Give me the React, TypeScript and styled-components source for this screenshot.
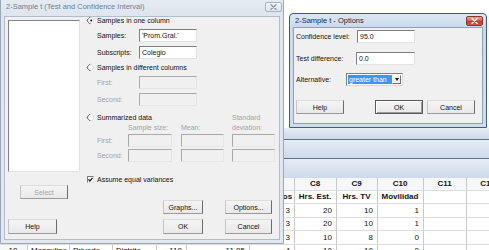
import React from "react";
import styled, { createGlobalStyle, css } from "styled-components";

const Global = createGlobalStyle`
  html, body { margin: 0; padding: 0; background: #fff; }
  body { width: 489px; height: 250px; overflow: hidden; font-family: "Liberation Sans", Arial, sans-serif; }
  * { box-sizing: border-box; }
`;

const FONT = `"Liberation Sans", Arial, sans-serif`;

/* ---------- desktop / worksheet behind ---------- */
const Desktop = styled.div`
  position: relative;
  width: 489px;
  height: 250px;
  overflow: hidden;
  background: #fff;
`;

const Worksheet = styled.div`
  display: flex;
  flex-direction: column;
  width: 100%;
`;

const SessionArea = styled.div`
  height: 128px;
  background: #fff;
`;

const Band = styled.div<{ $h: number; $line?: boolean }>`
  height: ${(p) => p.$h}px;
  background: linear-gradient(#e6edf5, #ccdaea);
  ${(p) => p.$line && css`border-bottom: 1px solid #5f7186;`}
`;

const Grid = styled.div<{ $cols: string }>`
  display: grid;
  grid-template-columns: ${(p) => p.$cols};
  font-family: ${FONT};
  color: #111;
`;

const Cell = styled.div<{ $h: number; $align?: string; $bold?: boolean; $bg?: string }>`
  height: ${(p) => p.$h}px;
  line-height: ${(p) => p.$h - 1}px;
  font-size: 8px;
  font-weight: ${(p) => (p.$bold ? 700 : 400)};
  text-align: ${(p) => p.$align || "right"};
  padding: 0 4px 0 3px;
  background: ${(p) => p.$bg || "#fff"};
  border-right: 1px solid #c9c9c9;
  border-bottom: 1px solid #dcdcdc;
  white-space: nowrap;
  overflow: hidden;
`;

/* ---------- windows ---------- */
const Win = styled.div<{ $active?: boolean }>`
  position: absolute;
  display: flex;
  flex-direction: column;
  border: 1px solid ${(p) => (p.$active ? "#3d5d7f" : "#98a8ba")};
  border-radius: 4px 4px 0 0;
  background: ${(p) =>
    p.$active
      ? "linear-gradient(#dbe6f3, #c9d9ec 14px, #cddcee)"
      : "linear-gradient(#e6ecf3, #dfe6ee 16px, #e1e8f0)"};
  padding: 0 3px 3px;
  font-family: ${FONT};
`;

const MainWin = styled(Win)`
  left: 0;
  top: -4px;
  width: 284px;
  height: 248px;
`;

const OptWin = styled(Win)`
  left: 289px;
  top: 13px;
  width: 198px;
  height: 115px;
`;

const TitleBar = styled.div<{ $h: number; $active?: boolean }>`
  height: ${(p) => p.$h}px;
  display: flex;
  align-items: center;
  justify-content: space-between;
  padding-left: 2px;
  font-size: 7.5px;
  color: ${(p) => (p.$active ? "#1b2a3c" : "#6e7f93")};
  white-space: nowrap;
`;

const CloseBtn = styled.div<{ $active?: boolean }>`
  width: 17px;
  height: 10px;
  border-radius: 2px;
  display: flex;
  align-items: center;
  justify-content: center;
  ${(p) =>
    p.$active
      ? css`
          border: 1px solid #86352b;
          background: linear-gradient(#eba597, #d3604f 45%, #c13c2c 55%, #cf5a45);
        `
      : css`
          border: 1px solid #a6b2c1;
          background: linear-gradient(#f2f5f9, #dfe5ed);
          margin-right: -2px;
        `}
`;

const Client = styled.div<{ $active?: boolean }>`
  flex: 1;
  background: #f0f0f0;
  border: 1px solid ${(p) => (p.$active ? "#8ea3bb" : "#b1bdcb")};
  font-size: 7px;
  color: #111;
`;

/* ---------- controls ---------- */
const Button = styled.div<{ $w: number; $h?: number; $default?: boolean; $disabled?: boolean; $mr?: number }>`
  width: ${(p) => p.$w}px;
  height: ${(p) => p.$h || 15}px;
  margin-right: ${(p) => p.$mr || 0}px;
  display: flex;
  align-items: center;
  justify-content: center;
  font-size: 7px;
  color: ${(p) => (p.$disabled ? "#a6a6a6" : "#111")};
  background: linear-gradient(#f4f4f4, #e9e9e9);
  border: 1px solid;
  border-color: #dcdcdc #6c6c6c #9a9a9a #c4c4c4;
  ${(p) =>
    p.$default &&
    css`
      border-color: #5a5a5a;
      box-shadow: inset 1px 1px 0 #fff, inset -1px -1px 0 #9a9a9a;
    `}
`;

const TextBox = styled.div<{ $w: number; $disabled?: boolean }>`
  width: ${(p) => p.$w}px;
  height: 13px;
  display: flex;
  align-items: center;
  padding-left: 2px;
  font-size: 7px;
  color: #111;
  white-space: nowrap;
  background: ${(p) => (p.$disabled ? "#f0f0f0" : "#fff")};
  border: 1px solid;
  border-color: ${(p) =>
    p.$disabled ? "#a9a9a9 #e6e6e6 #e6e6e6 #a9a9a9" : "#7e7e7e #e2e2e2 #e2e2e2 #7e7e7e"};
`;

const Label = styled.span<{ $disabled?: boolean }>`
  font-size: 7px;
  color: ${(p) => (p.$disabled ? "#a3a3a3" : "#111")};
  white-space: nowrap;
`;

const RadioDot = styled.span<{ $on?: boolean }>`
  position: relative;
  width: 7px;
  height: 7px;
  border-radius: 50%;
  background: #fff;
  border: 1px solid;
  border-color: #7b7b7b #e4e4e4 #e4e4e4 #7b7b7b;
  transform: rotate(-45deg);
  flex: none;
  ${(p) =>
    p.$on &&
    css`
      &::after {
        content: "";
        position: absolute;
        left: 1.5px;
        top: 1.5px;
        width: 2px;
        height: 2px;
        border-radius: 50%;
        background: #111;
      }
    `}
`;

const Check = styled.span`
  width: 7px;
  height: 7px;
  background: #fff;
  border: 1px solid;
  border-color: #7b7b7b #e4e4e4 #e4e4e4 #7b7b7b;
  display: flex;
  flex: none;
`;

const Choice = styled.div<{ $mt: number }>`
  display: flex;
  align-items: center;
  gap: 3px;
  height: 8px;
  margin-top: ${(p) => p.$mt}px;
`;

/* ---------- main dialog layout ---------- */
const MainBody = styled.div`
  display: flex;
  height: 100%;
`;

const LeftCol = styled.div`
  width: 79px;
  display: flex;
  flex-direction: column;
  align-items: flex-start;
`;

const ListBox = styled.div`
  margin: 3px 0 0 3px;
  width: 72px;
  height: 152px;
  background: #fff;
  border: 1px solid;
  border-color: #828282 #e3e3e3 #e3e3e3 #828282;
`;

const Spaced = styled.div<{ $mt: number; $ml: number }>`
  margin-top: ${(p) => p.$mt}px;
  margin-left: ${(p) => p.$ml}px;
`;

const RightCol = styled.div`
  flex: 1;
  display: flex;
  flex-direction: column;
  padding-left: 3px;
`;

const FieldRow = styled.div<{ $mt: number }>`
  display: grid;
  grid-template-columns: 10px 42px 58px;
  align-items: center;
  height: 13px;
  margin-top: ${(p) => p.$mt}px;
`;

const SummaryGrid = styled.div`
  margin-top: 7px;
  display: grid;
  grid-template-columns: 10px 31px 44px 9px 43px 8px 43px;
  grid-template-rows: 8px 2px 8px 3px 13px 2px 13px;
  align-items: center;
`;

const GridItem = styled.div<{ $col: string; $row: number }>`
  grid-column: ${(p) => p.$col};
  grid-row: ${(p) => p.$row};
  display: flex;
  align-items: center;
  gap: 3px;
`;

const ButtonRow = styled.div<{ $mt: number; $pl: number; $gap: number }>`
  display: flex;
  margin-top: ${(p) => p.$mt}px;
  padding-left: ${(p) => p.$pl}px;
  gap: ${(p) => p.$gap}px;
`;

/* ---------- options dialog ---------- */
const OptBody = styled.div`
  display: flex;
  flex-direction: column;
  padding-left: 2px;
`;

const OptRow = styled.div<{ $mt: number; $lw: number }>`
  display: grid;
  grid-template-columns: ${(p) => p.$lw}px auto;
  justify-content: start;
  align-items: center;
  height: 13px;
  margin-top: ${(p) => p.$mt}px;
`;

const Combo = styled.div`
  width: 57px;
  height: 13px;
  display: flex;
  background: #fff;
  border: 1px solid;
  border-color: #7e7e7e #d8d8d8 #d8d8d8 #7e7e7e;
  padding: 1px;
`;

const ComboValue = styled.div`
  flex: 1;
  background: #3399ff;
  color: #fff;
  font-size: 7px;
  line-height: 9px;
  padding-left: 1px;
  white-space: nowrap;
  overflow: hidden;
`;

const ComboArrow = styled.div`
  width: 9px;
  display: flex;
  align-items: center;
  justify-content: center;
  background: #efefef;
  border: 1px solid;
  border-color: #f8f8f8 #707070 #707070 #f8f8f8;
  &::after {
    content: "";
    border-left: 2.5px solid transparent;
    border-right: 2.5px solid transparent;
    border-top: 3px solid #111;
  }
`;

const XIcon = ({ color }: { color: string }) => (
  <svg width="7" height="6" viewBox="0 0 7 6">
    <path d="M1 0.8 L6 5.2 M6 0.8 L1 5.2" stroke={color} strokeWidth="1.4" strokeLinecap="round" />
  </svg>
);

/* ---------- data ---------- */
/* columns left of x=250 lie under the main dialog: only the bottom row shows there */
const colWidths = [28, 42, 43, 44, 30, 63, 45, 42, 41, 46, 43, 43];
const heads = ["", "", "", "", "", "", "", "C8", "C9", "C10", "C11", "C12"];
const names = ["", "", "", "", "", "", "Hermanos", "Hrs. Est.", "Hrs. TV", "Movilidad", "", ""];
const rows: { h: number; cells: string[] }[] = [
  { h: 14, cells: ["", "", "", "", "", "", "3", "20", "10", "1", "", ""] },
  { h: 13, cells: ["", "", "", "", "", "", "3", "20", "10", "1", "", ""] },
  { h: 14, cells: ["", "", "", "", "", "", "3", "10", "8", "0", "", ""] },
  { h: 13, cells: ["10", "Masculino", "Privado", "Distrito", "110", "11.05", "4", "10", "10", "0", "", ""] },
];
const textCols = new Set([1, 2, 3]);

export default function App() {
  const cols = colWidths.map((w) => `${w}px`).join(" ");
  return (
    <Desktop>
      <Global />
      <Worksheet>
        <SessionArea />
        <Band $h={12} $line />
        <Band $h={19} $line />
        <Band $h={19} />
        <Grid $cols={cols}>
          {heads.map((h, i) => (
            <Cell key={`h${i}`} $h={13} $bold $align="center" $bg="#f6f7f8">
              {h}
            </Cell>
          ))}
          {names.map((n, i) => (
            <Cell key={`n${i}`} $h={13} $bold $align="center">
              {n}
            </Cell>
          ))}
          {rows.map((r, ri) =>
            r.cells.map((c, ci) => (
              <Cell
                key={`r${ri}c${ci}`}
                $h={r.h}
                $align={ci === 0 ? "center" : textCols.has(ci) ? "left" : "right"}
                $bg={ci === 0 ? "#f6f7f8" : "#fff"}
              >
                {c}
              </Cell>
            ))
          )}
        </Grid>
      </Worksheet>

      <MainWin>
        <TitleBar $h={19}>
          <span>2-Sample t (Test and Confidence Interval)</span>
          <CloseBtn>
            <XIcon color="#8a98a9" />
          </CloseBtn>
        </TitleBar>
        <Client>
          <MainBody>
            <LeftCol>
              <ListBox />
              <Spaced $mt={13} $ml={15}>
                <Button $w={48} $h={14} $disabled>
                  Select
                </Button>
              </Spaced>
              <Spaced $mt={20} $ml={3}>
                <Button $w={49}>Help</Button>
              </Spaced>
            </LeftCol>
            <RightCol>
              <Choice $mt={-1}>
                <RadioDot $on />
                <Label>Samples in one column</Label>
              </Choice>
              <FieldRow $mt={5}>
                <span />
                <Label>Samples:</Label>
                <TextBox $w={58}>'Prom.Gral.'</TextBox>
              </FieldRow>
              <FieldRow $mt={4}>
                <span />
                <Label>Subscripts:</Label>
                <TextBox $w={58}>Colegio</TextBox>
              </FieldRow>
              <Choice $mt={4}>
                <RadioDot />
                <Label>Samples in different columns</Label>
              </Choice>
              <FieldRow $mt={5}>
                <span />
                <Label $disabled>First:</Label>
                <TextBox $w={58} $disabled />
              </FieldRow>
              <FieldRow $mt={4}>
                <span />
                <Label $disabled>Second:</Label>
                <TextBox $w={58} $disabled />
              </FieldRow>
              <SummaryGrid>
                <GridItem $col="1 / 6" $row={1}>
                  <RadioDot />
                  <Label>Summarized data</Label>
                </GridItem>
                <GridItem $col="7" $row={1}>
                  <Label $disabled>Standard</Label>
                </GridItem>
                <GridItem $col="3" $row={3}>
                  <Label $disabled>Sample size:</Label>
                </GridItem>
                <GridItem $col="5" $row={3}>
                  <Label $disabled>Mean:</Label>
                </GridItem>
                <GridItem $col="7" $row={3}>
                  <Label $disabled>deviation:</Label>
                </GridItem>
                <GridItem $col="2" $row={5}>
                  <Label $disabled>First:</Label>
                </GridItem>
                <GridItem $col="3" $row={5}>
                  <TextBox $w={44} $disabled />
                </GridItem>
                <GridItem $col="5" $row={5}>
                  <TextBox $w={43} $disabled />
                </GridItem>
                <GridItem $col="7" $row={5}>
                  <TextBox $w={43} $disabled />
                </GridItem>
                <GridItem $col="2" $row={7}>
                  <Label $disabled>Second:</Label>
                </GridItem>
                <GridItem $col="3" $row={7}>
                  <TextBox $w={44} $disabled />
                </GridItem>
                <GridItem $col="5" $row={7}>
                  <TextBox $w={43} $disabled />
                </GridItem>
                <GridItem $col="7" $row={7}>
                  <TextBox $w={43} $disabled />
                </GridItem>
              </SummaryGrid>
              <Choice $mt={13}>
                <Check>
                  <svg width="5" height="5" viewBox="0 0 5 5">
                    <path d="M0.4 2.4 L1.9 4 L4.6 0.8" fill="none" stroke="#111" strokeWidth="1.2" />
                  </svg>
                </Check>
                <Label>Assume equal variances</Label>
              </Choice>
              <ButtonRow $mt={17} $pl={76} $gap={22}>
                <Button $w={40} $h={14}>
                  Graphs...
                </Button>
                <Button $w={47} $h={14}>
                  Options...
                </Button>
              </ButtonRow>
              <ButtonRow $mt={5} $pl={76} $gap={22}>
                <Button $w={40}>OK</Button>
                <Button $w={47}>Cancel</Button>
              </ButtonRow>
            </RightCol>
          </MainBody>
        </Client>
      </MainWin>

      <OptWin $active>
        <TitleBar $h={13} $active>
          <span>2-Sample t - Options</span>
          <CloseBtn $active>
            <XIcon color="#fff" />
          </CloseBtn>
        </TitleBar>
        <Client $active>
          <OptBody>
            <OptRow $mt={2} $lw={61}>
              <Label>Confidence level:</Label>
              <TextBox $w={58}>95.0</TextBox>
            </OptRow>
            <OptRow $mt={9} $lw={60}>
              <Label>Test difference:</Label>
              <TextBox $w={59}>0.0</TextBox>
            </OptRow>
            <OptRow $mt={8} $lw={50}>
              <Label>Alternative:</Label>
              <Combo>
                <ComboValue>greater than</ComboValue>
                <ComboArrow />
              </Combo>
            </OptRow>
            <ButtonRow $mt={14} $pl={0} $gap={4}>
              <Button $w={48} $h={14} $mr={27}>
                Help
              </Button>
              <Button $w={48} $h={14} $default>
                OK
              </Button>
              <Button $w={48} $h={14}>
                Cancel
              </Button>
            </ButtonRow>
          </OptBody>
        </Client>
      </OptWin>
    </Desktop>
  );
}
